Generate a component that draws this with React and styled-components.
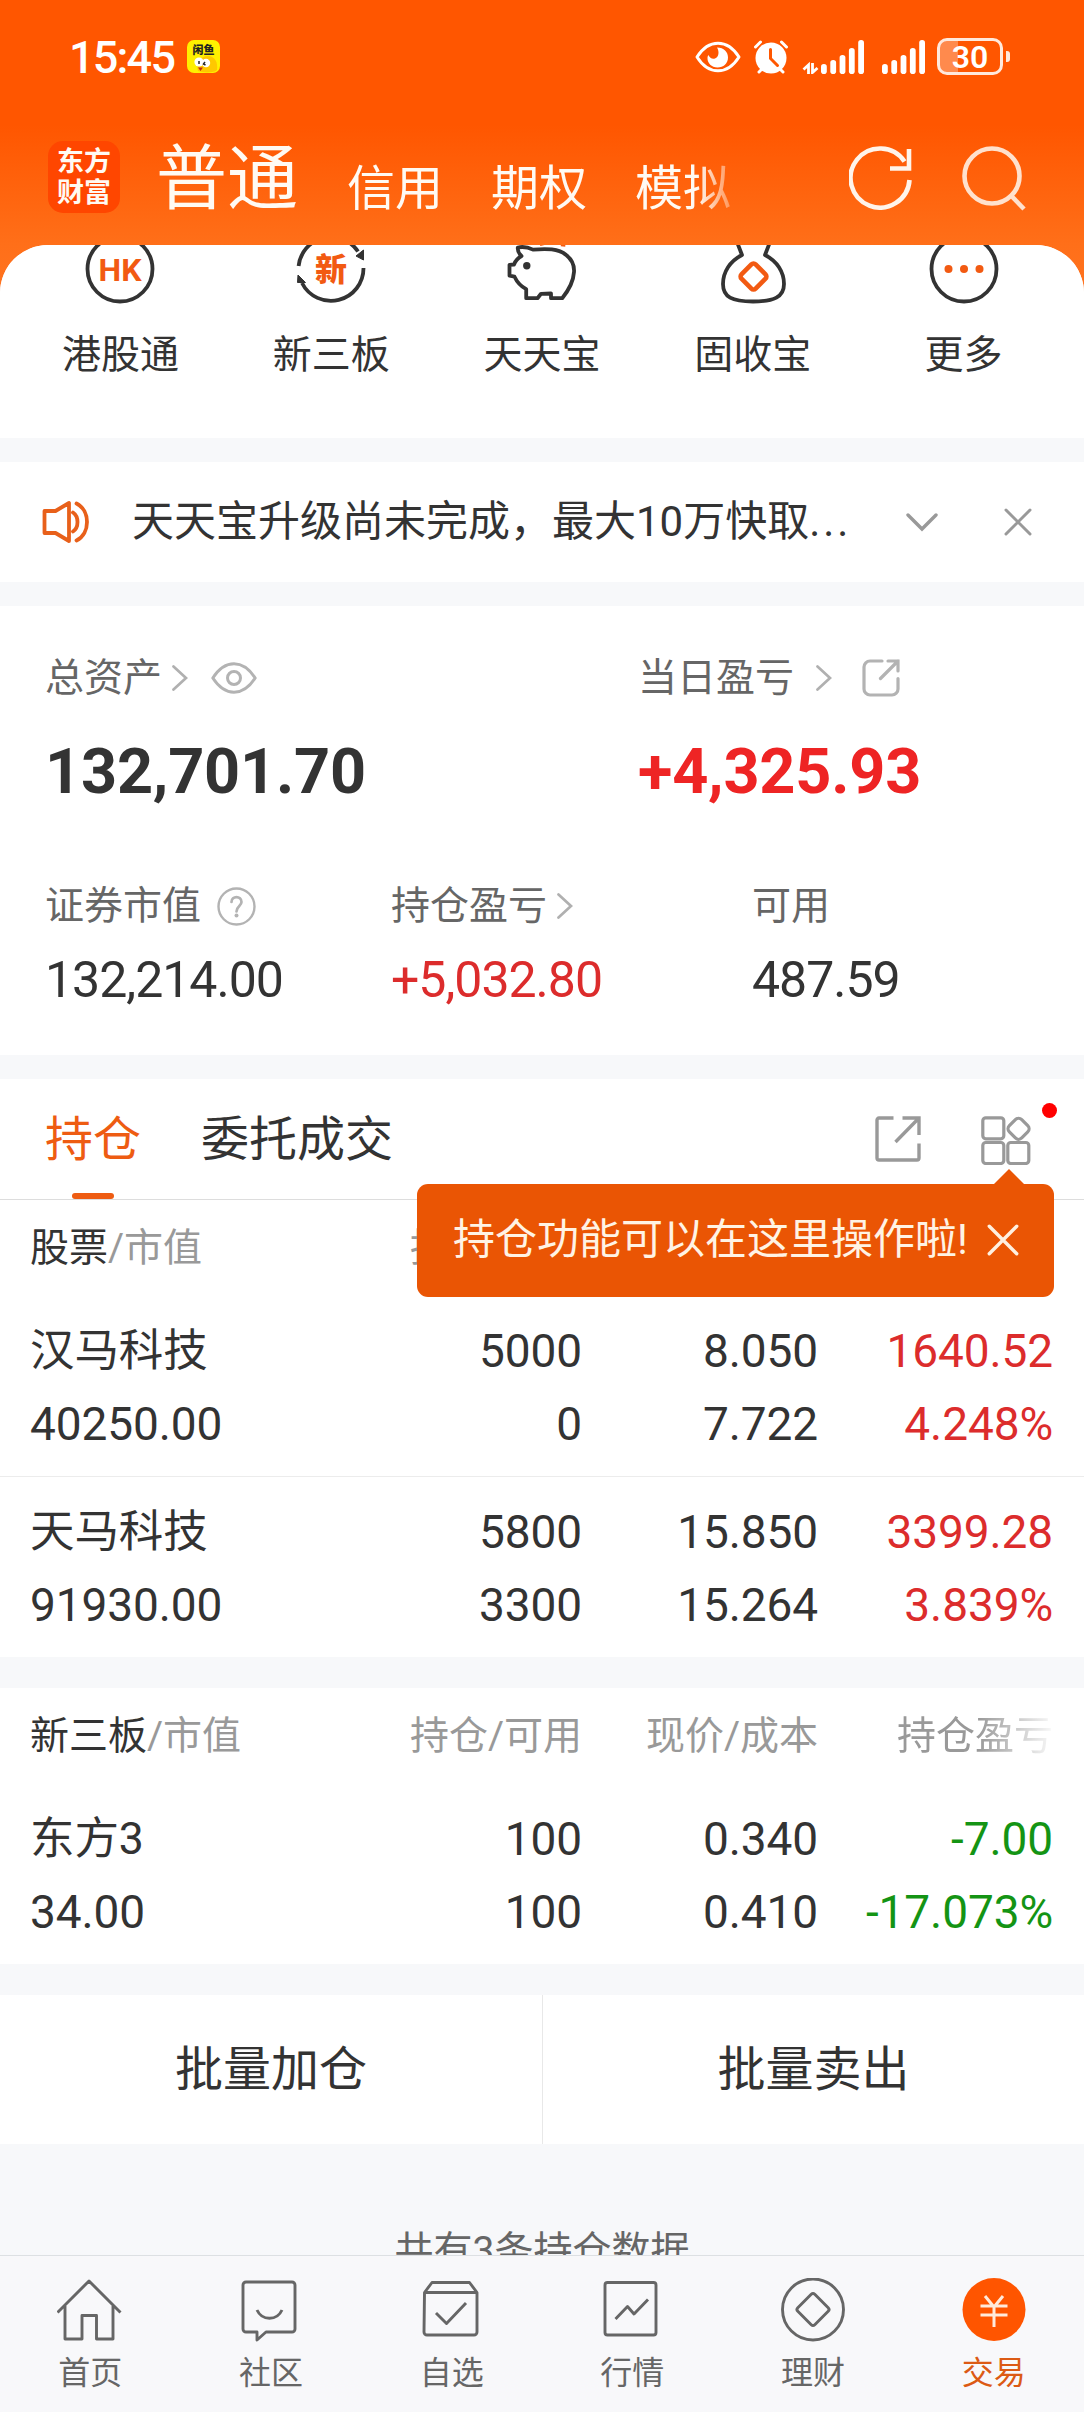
import React from 'react';
import styled, { createGlobalStyle } from 'styled-components';

const quickLinks = [
	{ label: '港股通', icon: 'hk' },
	{ label: '新三板', icon: 'neeq' },
	{ label: '天天宝', icon: 'pig' },
	{ label: '固收宝', icon: 'bag' },
	{ label: '更多', icon: 'more' },
];

const stocks = [
	{ name: '汉马科技', value: '40250.00', held: '5000', usable: '0', price: '8.050', cost: '7.722', profit: '1640.52', rate: '4.248%', up: true },
	{ name: '天马科技', value: '91930.00', held: '5800', usable: '3300', price: '15.850', cost: '15.264', profit: '3399.28', rate: '3.839%', up: true },
];

const neeqStocks = [
	{ name: '东方3', value: '34.00', held: '100', usable: '100', price: '0.340', cost: '0.410', profit: '-7.00', rate: '-17.073%', up: false },
];

const navItems = [
	{ label: '首页', icon: 'home' },
	{ label: '社区', icon: 'community' },
	{ label: '自选', icon: 'watchlist' },
	{ label: '行情', icon: 'market' },
	{ label: '理财', icon: 'wealth' },
	{ label: '交易', icon: 'trade', active: true },
];

/* Status bar icons */

const FishIcon = () => (
	<svg width="33" height="33" viewBox="0 0 33 33">
		<rect width="33" height="33" rx="7" fill="#fff000" />
		<path d="M11 31c-3-9 4-16 11-15 6 1 9 6 8 14-2 3-14 3-19 1z" fill="#ffc800" />
		<circle cx="12" cy="22" r="4.6" fill="#fff" />
		<circle cx="19" cy="23" r="4.2" fill="#fff" />
		<path d="M12 21v3M18 22l-1.500 2 2 1" stroke="#222" strokeWidth="1.500" fill="none" />
		<path d="M11 27.500h5l-2.500 3.500z" fill="#c22a12" />
		<text x="16.500" y="14" textAnchor="middle" fontSize="11" fontWeight="900" fill="#222">闲鱼</text>
	</svg>
);

const EyeComfortIcon = () => (
	<svg width="46" height="32" viewBox="0 0 46 32">
		<path d="M2 16C8 6.500 15 2.200 23 2.200S38 6.500 44 16c-6 9.500-13 13.800-21 13.800S8 25.500 2 16z" fill="none" stroke="#fff" strokeWidth="3" strokeLinejoin="round" />
		<path d="M22 6.500c7 0 11 4.500 11 10 0 6-4.500 10-10.500 10S12.500 22 12.500 17.500c0-1.500.3-2.500.8-3.500 1.500 3 4 4.500 6.700 3.500 4-1.500 4.500-7 2-11z" fill="#fff" />
	</svg>
);

const AlarmIcon = () => (
	<svg width="36" height="34" viewBox="0 0 36 34">
		<circle cx="18" cy="18" r="15.500" fill="#fff" />
		<path d="M2.500 7l5-5M33.500 7l-5-5M6 32l4-4M30 32l-4-4" stroke="#fff" strokeWidth="3" strokeLinecap="round" />
		<path d="M17.500 9.500v9l7 7" fill="none" stroke="#ff5700" strokeWidth="3" strokeLinecap="round" />
	</svg>
);

const SignalIcon = ({ data }) => (
	<svg width={data ? 62 : 43} height="34" viewBox={data ? '-19 0 62 34' : '0 0 43 34'}>
		{data && <path d="M-12.500 34V25l-5 4.500M-8.500 23v9.500l5-4.500" fill="none" stroke="#fff" strokeWidth="2.800" />}
		{[10, 14, 19, 26, 34].map((h, i) => (
			<rect key={h} x={i * 9.300} y={34 - h} width="5.800" height={h} rx="2.800" fill="#fff" />
		))}
	</svg>
);

/* Header icons */

const RefreshIcon = () => (
	<svg width="64" height="64" viewBox="0 0 64 64">
		<path d="M60.500 34A29.500 29.500 0 1 1 55.500 15.500" fill="none" stroke="#fff4ea" strokeWidth="4.600" />
		<path d="M41 22.500h19V3" fill="none" stroke="#fff4ea" strokeWidth="4.600" />
	</svg>
);

const SearchIcon = () => (
	<svg width="64" height="66" viewBox="0 0 64 66">
		<circle cx="30" cy="30" r="27.500" fill="none" stroke="#ffe1cd" strokeWidth="4.600" />
		<path d="M48.500 49L62 63" stroke="#ffe1cd" strokeWidth="4.600" />
	</svg>
);

/* Quick link icons, all drawn in a 72px box */

const quickShapes = {
	hk: (
		<>
			<circle cx="36" cy="36" r="32.500" />
			<text x="36" y="47.500" textAnchor="middle" fontSize="32" fontWeight="700" fill="#f25a12" stroke="none">HK</text>
		</>
	),
	neeq: (
		<>
			<path d="M3.600 33A32.500 32.500 0 0 1 63 18.500M68.500 35A32.500 32.500 0 0 1 7 50" />
			<path d="M68.500 17v10l-7.500-4zM3 42l7.500 7.500H2.500z" fill="#333" strokeWidth="1" />
			<text x="36" y="47.500" textAnchor="middle" fontSize="32" fontWeight="900" fill="#f25a12" stroke="none">新</text>
		</>
	),
	pig: (
		<g transform="translate(-1.5 0)">
			<path d="M13.300 14.500C18 13.500 23 14 28.500 16.600 42 15.500 54 15.500 61.700 22 68 27 70 32 69.500 39 69 47 66 55 57.700 65.200H46.500v-4.700l-10 .3-3.500 4.400H21.700v-9C16 53 12.500 49 10 43.700l-5-1V31.800l4.500-.3c1.500-4 4-6.500 7.500-8.500-3-2.500-4-5.500-3.700-8.500z" />
			<circle cx="22.300" cy="32.700" r="3.700" fill="#333" stroke="none" />
			<path d="M38 12.500C35 0 60 0 58.500 13.500" stroke="#f25a12" strokeWidth="4.500" />
		</g>
	),
	bag: (
		<>
			<path d="M20 9l5 13C13 28 6 39 6 51c0 13 9 17.500 30 17.500S67 64 67 51C67 39 60 28 48 22l5-13" />
			<rect x="26.500" y="33.500" width="20" height="20" rx="3" transform="rotate(45 36.500 43.500)" stroke="#f25a12" strokeWidth="4.600" />
		</>
	),
	more: (
		<>
			<circle cx="36" cy="36" r="32.500" />
			<g fill="#f25a12" stroke="none">
				<circle cx="20.500" cy="36" r="4" />
				<circle cx="36" cy="36" r="4" />
				<circle cx="51.500" cy="36" r="4" />
			</g>
		</>
	),
};

const QuickIcon = ({ name }) => (
	<svg width="72" height="72" viewBox="0 0 72 72" fill="none" stroke="#333" strokeWidth="3.800" strokeLinejoin="round">
		{quickShapes[name]}
	</svg>
);

/* Small line icons */

const SpeakerIcon = () => (
	<svg width="47" height="42" viewBox="0 0 47 42" fill="none" stroke="#e8601a" strokeWidth="3.800" strokeLinejoin="round" strokeLinecap="round">
		<path d="M2.500 10h11L27 2v38L13.500 32h-11z" />
		<path d="M31 11.500c6 4 6 15 0 19M34.500 2.500c14 7 14 30 0 37" />
	</svg>
);

const ChevronDown = () => (
	<svg width="32" height="19" viewBox="0 0 32 19">
		<path d="M2 2l14 14L30 2" fill="none" stroke="#999" strokeWidth="3.400" strokeLinecap="round" />
	</svg>
);

const ChevronRight = () => (
	<svg width="16" height="26" viewBox="0 0 16 26">
		<path d="M1.500 1.500L14 13 1.500 24.500" fill="none" stroke="#b0b0b0" strokeWidth="2.700" strokeLinecap="round" />
	</svg>
);

const CloseIcon = ({ size, color }) => (
	<svg width={size} height={size} viewBox="0 0 28 28">
		<path d="M2 2l24 24M26 2L2 26" stroke={color} strokeWidth="3" strokeLinecap="round" />
	</svg>
);

const EyeIcon = () => (
	<svg width="46" height="32" viewBox="0 0 46 32" fill="none" stroke="#b3b3b3" strokeWidth="3">
		<path d="M1.800 16C8 6.500 15 1.800 23 1.800S38 6.500 44.200 16C38 25.500 31 30.200 23 30.200S8 25.500 1.800 16z" strokeLinejoin="round" />
		<circle cx="23" cy="16" r="6.500" />
	</svg>
);

const RoundShareIcon = () => (
	<svg width="38" height="38" viewBox="0 0 38 38" fill="none" stroke="#b3b3b3" strokeWidth="3.200" strokeLinecap="round">
		<path d="M20 2H8a6 6 0 0 0-6 6v22a6 6 0 0 0 6 6h22a6 6 0 0 0 6-6V19.500" />
		<path d="M26 2h10v10M36 2L18.500 19.500" />
	</svg>
);

const ShareIcon = () => (
	<svg width="46" height="46" viewBox="0 0 46 46" fill="none" stroke="#999" strokeWidth="3.400">
		<path d="M18.500 2H4a2 2 0 0 0-2 2v38a2 2 0 0 0 2 2h38a2 2 0 0 0 2-2V27.500" />
		<path d="M27.500 2H44v17M44 2L20.500 26" />
	</svg>
);

const HelpIcon = () => (
	<svg width="39" height="39" viewBox="0 0 39 39">
		<circle cx="19.500" cy="19.500" r="18" fill="none" stroke="#b3b3b3" strokeWidth="2.400" />
		<path d="M14.500 15c0-6.500 10-6.500 10 0 0 4-5 4-5 9.500" fill="none" stroke="#b3b3b3" strokeWidth="2.700" strokeLinecap="round" />
		<circle cx="19.500" cy="28.500" r="2" fill="#b3b3b3" />
	</svg>
);

const GridIcon = () => (
	<svg width="50" height="49" viewBox="0 0 50 49" fill="none" stroke="#999" strokeWidth="3.200">
		<rect x="1.800" y="1.800" width="21" height="21" rx="3" />
		<rect x="1.800" y="26.500" width="21" height="21" rx="3" />
		<rect x="26.800" y="26.500" width="21" height="21" rx="3" />
		<rect x="28.800" y="4" width="17.500" height="17.500" rx="4.500" transform="rotate(45 37.500 12.800)" />
	</svg>
);

/* Bottom navigation icons, 66px box */

const navShapes = {
	home: <path d="M.5 34.500L32 3l31.500 31.500M8 28v33h17V37.500h14.500V61H56V28" />,
	community: (
		<>
			<path d="M8 4h46a3 3 0 0 1 3 3v44a3 3 0 0 1-3 3H28l-9 8v-8H8a3 3 0 0 1-3-3V7a3 3 0 0 1 3-3z" />
			<path d="M19 32c5 11 20 11 25 0" />
		</>
	),
	watchlist: (
		<g transform="translate(-1.5 0)">
			<path d="M7 14.500L14.500 4.500H52l7.500 10V54a3 3 0 0 1-3 3h-47a3 3 0 0 1-3-3zM7 14.500h52.500" />
			<path d="M18.500 35L29 45.500 48.500 25" />
		</g>
	),
	market: (
		<g transform="translate(-1.5 0)">
			<rect x="7.500" y="4.500" width="51" height="52.500" rx="2.500" />
			<path d="M18 41l12-12.500 6.500 7.500L50.500 21.500" />
		</g>
	),
	wealth: (
		<>
			<circle cx="33" cy="31.500" r="30.500" />
			<rect x="21" y="19.500" width="24" height="24" rx="2.500" transform="rotate(45 33 31.500)" />
		</>
	),
	trade: (
		<>
			<circle cx="33" cy="31.500" r="31.500" fill="#ff5500" stroke="none" />
			<path d="M24 18l9 11 9-11M19.500 28h27M19.500 37h27M33 29v20" stroke="#ffeadb" strokeWidth="3" />
		</>
	),
};

const NavIcon = ({ name }) => (
	<svg width="66" height="64" viewBox="0 0 66 64" fill="none" stroke="#666" strokeWidth="2.900" strokeLinejoin="round">
		{navShapes[name]}
	</svg>
);

const HoldingsTable = ({ title, rows }) => (
	<Table>
		<TableHead>
			<HeadCell><b>{title}</b>/市值</HeadCell>
			<HeadCell>持仓/可用</HeadCell>
			<HeadCell>现价/成本</HeadCell>
			<FadedHeadCell>持仓盈亏</FadedHeadCell>
		</TableHead>
		{rows.map((row) => (
			<Row key={row.name}>
				<Cell><Name>{row.name}</Name><span>{row.value}</span></Cell>
				<Cell><span>{row.held}</span><span>{row.usable}</span></Cell>
				<Cell><span>{row.price}</span><span>{row.cost}</span></Cell>
				<Cell $color={row.up ? '#dc2c2c' : '#149414'}><span>{row.profit}</span><span>{row.rate}</span></Cell>
			</Row>
		))}
	</Table>
);

export default function App() {
	return (
		<Screen>
			<GlobalStyle />
			<Header>
				<StatusBar>
					<Time>15:45</Time>
					<FishIcon />
					<StatusIcons>
						<EyeComfortIcon />
						<AlarmIcon />
						<SignalIcon data />
						<SignalIcon />
						<Battery>30</Battery>
					</StatusIcons>
				</StatusBar>
				<TopNav>
					<Logo><span>东方</span><span>财富</span></Logo>
					<CurrentAccount>普通</CurrentAccount>
					<Accounts>
						<span>信用</span>
						<span>期权</span>
						<span>模拟</span>
					</Accounts>
					<TopActions>
						<RefreshIcon />
						<SearchIcon />
					</TopActions>
				</TopNav>
			</Header>

			<Content>
				<QuickLinks>
					{quickLinks.map((item) => (
						<QuickLink key={item.label}>
							<QuickIcon name={item.icon} />
							{item.label}
						</QuickLink>
					))}
				</QuickLinks>

				<Notice>
					<SpeakerIcon />
					<NoticeText>天天宝升级尚未完成，最大10万快取<i>...</i></NoticeText>
					<ChevronDown />
					<CloseIcon size={28} color="#999" />
				</Notice>

				<Assets>
					<MainFigures>
						<div>
							<Label><span>总资产</span><ChevronRight /><EyeIcon /></Label>
							<BigNumber>132,701.70</BigNumber>
						</div>
						<div>
							<WideLabel><span>当日盈亏</span><ChevronRight /><RoundShareIcon /></WideLabel>
							<BigNumber $up>+4,325.93</BigNumber>
						</div>
					</MainFigures>
					<SubFigures>
						<div>
							<SubLabel $gap="16px"><span>证券市值</span><HelpIcon /></SubLabel>
							<Figure>132,214.00</Figure>
						</div>
						<div>
							<SubLabel $gap="10px"><span>持仓盈亏</span><ChevronRight /></SubLabel>
							<Figure $up>+5,032.80</Figure>
						</div>
						<div>
							<SubLabel><span>可用</span></SubLabel>
							<Figure>487.59</Figure>
						</div>
					</SubFigures>
				</Assets>

				<Tabs>
					<Tab $active>持仓</Tab>
					<Tab>委托成交</Tab>
					<TabActions>
						<ShareIcon />
						<GridButton>
							<GridIcon />
							<Dot />
						</GridButton>
					</TabActions>
					<Tooltip>
						持仓功能可以在这里操作啦!
						<CloseIcon size={32} color="#fff0e0" />
					</Tooltip>
				</Tabs>

				<HoldingsTable title="股票" rows={stocks} />
				<HoldingsTable title="新三板" rows={neeqStocks} />

				<BatchActions>
					<BatchButton>批量加仓</BatchButton>
					<BatchButton>批量卖出</BatchButton>
				</BatchActions>
				<Summary>共有3条持仓数据</Summary>
			</Content>

			<BottomNav>
				{navItems.map((item) => (
					<NavItem key={item.label} $active={item.active}>
						<NavIcon name={item.icon} />
						{item.label}
					</NavItem>
				))}
			</BottomNav>
		</Screen>
	);
}

const GlobalStyle = createGlobalStyle`
	* {
		box-sizing: border-box;
	}

	body {
		margin: 0;
		background: #f7f8fa;
		font-family: Roboto, "Noto Sans CJK SC", sans-serif;
		color: #333;
	}

	svg {
		display: block;
		flex-shrink: 0;
	}
`;

const Screen = styled.div`
	width: 1084px;
	height: 2412px;
	display: flex;
	flex-direction: column;
	overflow: hidden;
	background: linear-gradient(#ff5600 125px, #ff6f19 245px, #ff7420 300px);
`;

const Header = styled.header`
	height: 245px;
	flex-shrink: 0;
`;

const StatusBar = styled.div`
	height: 113px;
	padding: 0 74px 0 69px;
	display: flex;
	align-items: center;
	color: #fff;
`;

const Time = styled.div`
	width: 118px;
	padding-top: 2px;
	font-size: 45px;
	font-weight: 500;
	letter-spacing: -1.8px;
`;

const StatusIcons = styled.div`
	margin-left: auto;
	display: flex;
	align-items: center;

	svg:nth-child(2) {
		margin-left: 12px;
	}

	svg:nth-child(3) {
		margin-left: 13px;
	}

	svg:nth-child(4) {
		margin-left: 18px;
	}
`;

const Battery = styled.div`
	position: relative;
	width: 66px;
	height: 37px;
	margin: 0 7px 0 12px;
	border: 3px solid #ffe9dc;
	border-radius: 10px;
	background: linear-gradient(90deg, #ff8a4d 18px, transparent 18px);
	font-size: 32px;
	font-weight: 600;
	line-height: 32px;
	text-align: center;

	&::after {
		content: '';
		position: absolute;
		right: -10px;
		top: 10px;
		width: 4px;
		height: 11px;
		border-radius: 0 3px 3px 0;
		background: #ffe9dc;
	}
`;

const TopNav = styled.nav`
	height: 132px;
	padding: 0 58px 0 48px;
	display: flex;
	align-items: flex-start;
	color: #fffaf3;
`;

const Logo = styled.div`
	width: 72px;
	height: 72px;
	margin-top: 28px;
	padding-top: 6px;
	border-radius: 15px;
	background: #ff4600;
	display: flex;
	flex-direction: column;
	align-items: center;
	font-size: 27px;
	font-weight: 700;
	line-height: 31px;
`;

const CurrentAccount = styled.div`
	margin: 27px 0 0 36px;
	font-size: 71px;
	line-height: 78px;
`;

const Accounts = styled.div`
	width: 390px;
	margin: 48px 0 0 49px;
	display: flex;
	gap: 48px;
	font-size: 48px;
	line-height: 56px;
	mask-image: linear-gradient(90deg, #000 350px, transparent 400px);
`;

const TopActions = styled.div`
	margin: 33px 0 0 auto;
	display: flex;
	gap: 49px;
`;

const Content = styled.main`
	height: 2010px;
	flex-shrink: 0;
	overflow: hidden;
	border-radius: 48px 48px 0 0;
	background: #f7f8fa;
`;

const QuickLinks = styled.section`
	height: 193px;
	padding: 0 15px;
	display: grid;
	grid-template-columns: repeat(5, 1fr);
	background: #fff;
	overflow: hidden;
`;

const QuickLink = styled.div`
	margin-top: -12px;
	display: flex;
	flex-direction: column;
	align-items: center;
	gap: 25px;
	font-size: 39px;
	line-height: 50px;
`;

const Notice = styled.section`
	height: 120px;
	margin-top: 24px;
	padding: 0 52px 0 42px;
	display: flex;
	align-items: center;
	background: #fff;

	svg:last-child {
		margin-left: 66px;
	}
`;

const NoticeText = styled.div`
	flex: 1;
	margin-left: 43px;
	font-size: 42px;
	line-height: 60px;
	white-space: nowrap;

	i {
		font-style: normal;
		letter-spacing: 3px;
	}
`;

const Assets = styled.section`
	height: 449px;
	margin-top: 24px;
	padding: 47px 0 0 45px;
	background: #fff;
`;

const MainFigures = styled.div`
	height: 210px;
	display: grid;
	grid-template-columns: 593px 1fr;
`;

const Label = styled.div`
	height: 50px;
	display: flex;
	align-items: center;
	font-size: 39px;
	line-height: 50px;
	color: #666;

	svg {
		margin-left: 10px;
	}

	svg + svg {
		margin-left: 23px;
	}
`;

const WideLabel = styled(Label)`
	svg {
		margin-left: 22px;
	}

	svg + svg {
		margin-left: 30px;
	}
`;

const SubLabel = styled(Label)`
	svg {
		margin-left: ${({ $gap }) => $gap || 0};
	}
`;

const BigNumber = styled.div`
	margin-top: 32px;
	font-size: 63px;
	font-weight: 700;
	line-height: 74px;
	letter-spacing: -.2px;
	color: ${({ $up }) => ($up ? '#ee2424' : '#333')};
`;

const SubFigures = styled.div`
	padding-top: 18px;
	display: grid;
	grid-template-columns: 346px 361px 1fr;
`;

const Figure = styled.div`
	margin-top: 19px;
	font-size: 50px;
	line-height: 60px;
	letter-spacing: -1px;
	color: ${({ $up }) => ($up ? '#dc2c2c' : '#333')};
`;

const Tabs = styled.div`
	position: relative;
	height: 121px;
	margin-top: 24px;
	padding: 0 53px 0 45px;
	display: flex;
	gap: 60px;
	background: #fff;
	border-bottom: 1px solid #ddd;
`;

const Tab = styled.div`
	height: 120px;
	display: flex;
	flex-direction: column;
	align-items: center;
	justify-content: space-between;
	font-size: 48px;
	line-height: 121px;
	color: ${({ $active }) => ($active ? '#ee5c12' : '#333')};

	&::after {
		content: '';
		width: 42px;
		height: 6px;
		margin-top: -7px;
		border-radius: 3px;
		background: ${({ $active }) => ($active ? '#ee5c12' : 'none')};
	}
`;

const TabActions = styled.div`
	margin-left: auto;
	padding-top: 37px;
	display: flex;
	gap: 60px;
`;

const GridButton = styled.div`
	position: relative;
`;

const Dot = styled.i`
	position: absolute;
	left: 61px;
	top: -13px;
	width: 15px;
	height: 15px;
	border-radius: 50%;
	background: #f00;
`;

const Tooltip = styled.div`
	position: absolute;
	z-index: 2;
	top: 105px;
	right: 30px;
	width: 637px;
	height: 113px;
	padding: 0 35px 2px 36px;
	display: flex;
	align-items: center;
	justify-content: space-between;
	border-radius: 11px;
	background: #ea5504;
	color: #fff3e4;
	font-size: 42px;
	line-height: 60px;
	white-space: nowrap;

	&::before {
		content: '';
		position: absolute;
		top: -15px;
		right: 30px;
		border: solid transparent;
		border-width: 0 15px 15px;
		border-bottom-color: #ea5504;
	}
`;

const Table = styled.section`
	background: #fff;

	& + & {
		margin-top: 31px;
	}
`;

const TableHead = styled.div`
	height: 96px;
	padding: 0 31px 0 30px;
	display: grid;
	grid-template-columns: 316px 236px 236px 235px;
	align-items: center;
	font-size: 39px;
	line-height: 50px;
	color: #999;
`;

const HeadCell = styled.div`
	text-align: right;

	&:first-child {
		text-align: left;
	}

	b {
		font-weight: 400;
		color: #333;
	}
`;

const FadedHeadCell = styled(HeadCell)`
	mask-image: linear-gradient(90deg, #000 68%, transparent 102%);
`;

const Row = styled.div`
	height: 180px;
	padding: 19px 31px 0 30px;
	display: grid;
	grid-template-columns: 316px 236px 236px 235px;
	font-size: 46px;
	line-height: 73px;
	letter-spacing: -.1px;

	& + & {
		height: 181px;
		border-top: 1px solid #ececec;
	}
`;

const Cell = styled.div`
	display: flex;
	flex-direction: column;
	align-items: flex-end;
	color: ${({ $color }) => $color || 'inherit'};

	&:first-child {
		align-items: flex-start;
	}
`;

const Name = styled.span`
	font-size: 44.5px;
`;

const BatchActions = styled.div`
	height: 149px;
	margin-top: 31px;
	display: grid;
	grid-template-columns: 1fr 1fr;
	background: #fff;
`;

const BatchButton = styled.div`
	display: flex;
	align-items: center;
	justify-content: center;
	padding-top: 1px;
	font-size: 48px;
	line-height: 60px;

	& + & {
		border-left: 1px solid #e8e8e8;
	}
`;

const Summary = styled.div`
	padding-top: 82px;
	text-align: center;
	font-size: 39px;
	line-height: 50px;
	color: #666;
`;

const BottomNav = styled.nav`
	height: 157px;
	flex-shrink: 0;
	display: grid;
	grid-template-columns: repeat(6, 1fr);
	background: #f8f8fa;
	border-top: 1px solid #dde0e3;
`;

const NavItem = styled.div`
	padding-top: 22px;
	display: flex;
	flex-direction: column;
	align-items: center;
	gap: 10px;
	font-size: 32px;
	line-height: 42px;
	color: ${({ $active }) => ($active ? '#dc5a14' : '#666')};
`;
